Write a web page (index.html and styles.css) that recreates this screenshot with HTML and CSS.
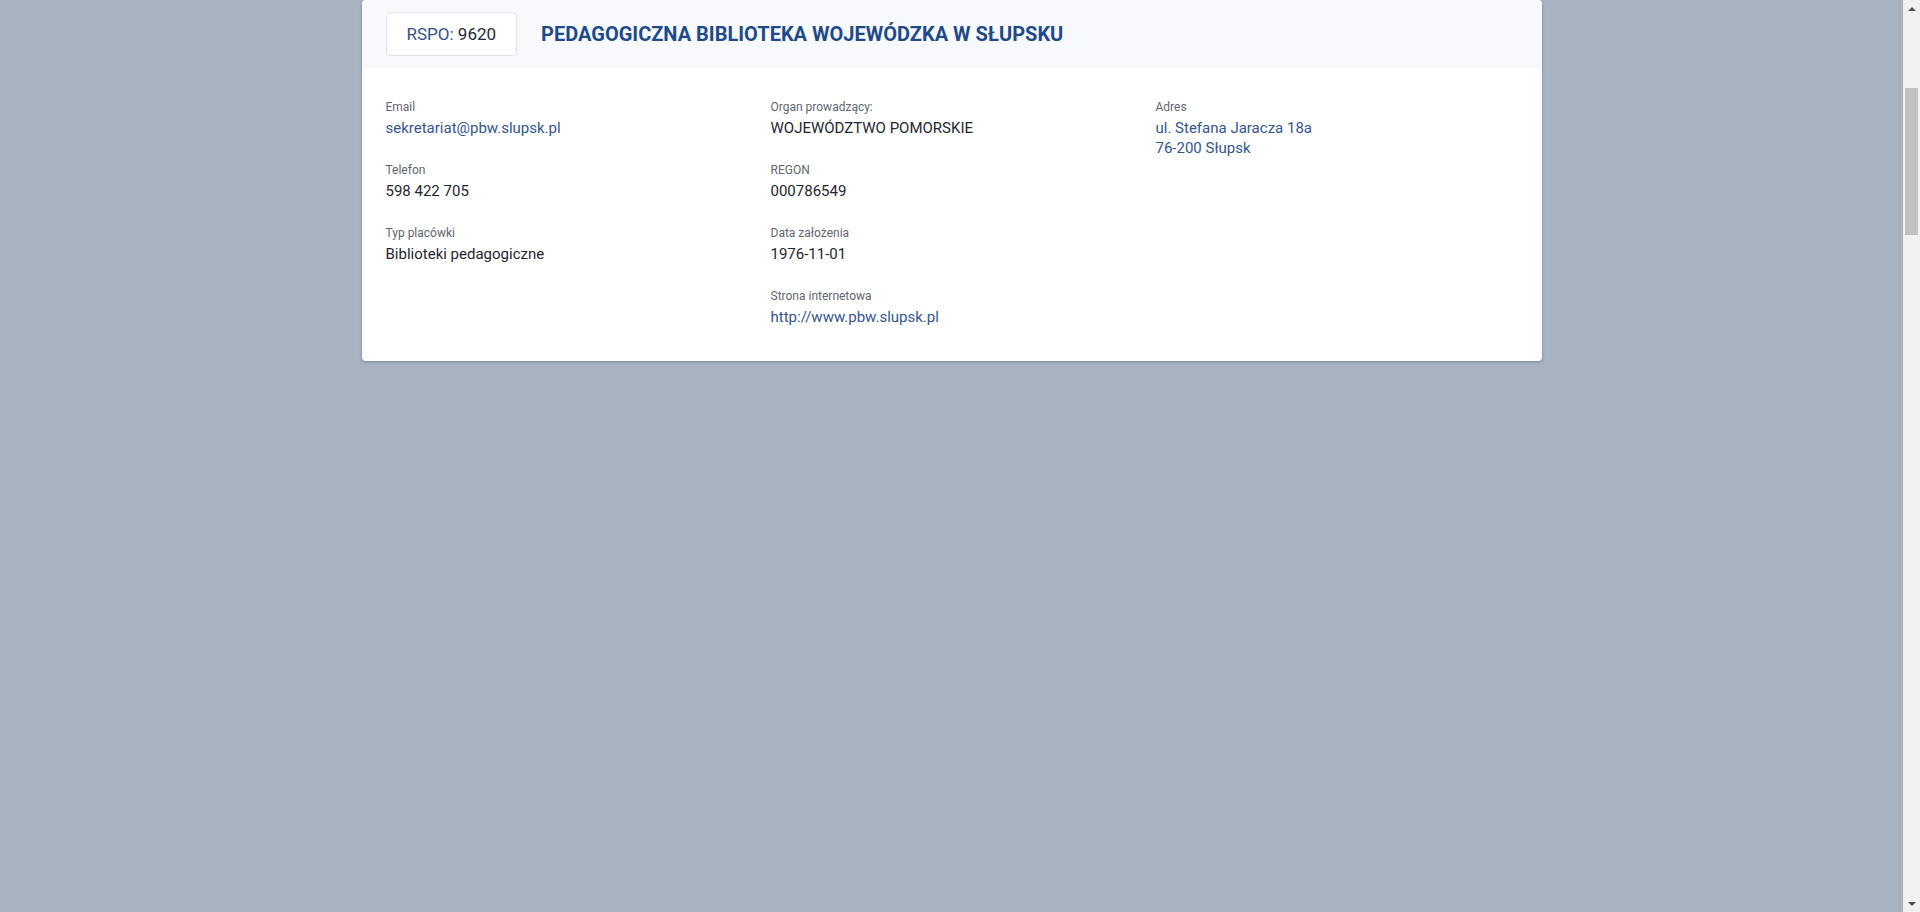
FILE: index.html
```html
<!DOCTYPE html>
<html lang="pl">
<head>
<meta charset="utf-8">
<title>Pedagogiczna Biblioteka Wojewódzka w Słupsku</title>
<link rel="stylesheet" href="styles.css">
</head>
<body>
<main class="page">
  <section class="card">
    <header class="card-header">
      <div class="rspo"><span class="rspo-label">RSPO:</span> 9620</div>
      <h1 class="title">PEDAGOGICZNA BIBLIOTEKA WOJEWÓDZKA W SŁUPSKU</h1>
    </header>
    <div class="card-body">
      <div class="col">
        <div class="field">
          <div class="label">Email</div>
          <a class="value link" href="#">sekretariat@pbw.slupsk.pl</a>
        </div>
        <div class="field">
          <div class="label">Telefon</div>
          <div class="value">598 422 705</div>
        </div>
        <div class="field">
          <div class="label">Typ placówki</div>
          <div class="value">Biblioteki pedagogiczne</div>
        </div>
      </div>
      <div class="col">
        <div class="field">
          <div class="label">Organ prowadzący:</div>
          <div class="value">WOJEWÓDZTWO POMORSKIE</div>
        </div>
        <div class="field">
          <div class="label">REGON</div>
          <div class="value">000786549</div>
        </div>
        <div class="field">
          <div class="label">Data założenia</div>
          <div class="value">1976-11-01</div>
        </div>
        <div class="field">
          <div class="label">Strona internetowa</div>
          <a class="value link" href="#">http://www.pbw.slupsk.pl</a>
        </div>
      </div>
      <div class="col">
        <div class="field">
          <div class="label">Adres</div>
          <a class="value link" href="#">ul. Stefana Jaracza 18a<br>76-200 Słupsk</a>
        </div>
      </div>
    </div>
  </section>
</main>
<aside class="scrollbar">
  <div class="arrow arrow-up"></div>
  <div class="track"><div class="thumb"></div></div>
  <div class="arrow arrow-down"></div>
</aside>
</body>
</html>
```
FILE: styles.css
```css
html, body {
  margin: 0;
  padding: 0;
  height: 100%;
}
body {
  display: flex;
  background: #a8b3c1;
  font-family: Roboto, "Liberation Sans", Arial, sans-serif;
  overflow: hidden;
}
.page {
  flex: 1;
  display: flex;
  justify-content: center;
  align-items: flex-start;
}
.card {
  width: 1180px;
  background: #ffffff;
  border-radius: 4px;
  box-shadow: 0 1px 3px rgba(40, 50, 70, 0.35);
}
.card-header {
  display: flex;
  align-items: center;
  gap: 24px;
  padding: 12px 24px;
  background: #f7f9fc;
  border-radius: 4px 4px 0 0;
}
.rspo {
  height: 42px;
  line-height: 42px;
  padding: 0 20px;
  border: 1px solid #dfe3ea;
  border-radius: 4px;
  background: #ffffff;
  font-size: 17px;
  color: #222a35;
}
.rspo-label {
  color: #34508a;
}
.title {
  margin: 0;
  font-size: 20px;
  font-weight: 700;
  color: #1f4a8a;
  letter-spacing: 0;
}
.card-body {
  display: grid;
  grid-template-columns: repeat(3, 385px);
  padding: 31px 24px 34px;
}
.col {
  display: flex;
  flex-direction: column;
  gap: 24px;
}
.field {
  display: flex;
  flex-direction: column;
  gap: 3px;
}
.label {
  font-size: 12px;
  line-height: 16px;
  color: #5f6670;
}
.value {
  font-size: 15px;
  line-height: 20px;
  color: #1f2630;
}
.link {
  color: #34568f;
  text-decoration: none;
}
.scrollbar {
  width: 17px;
  flex: none;
  display: flex;
  flex-direction: column;
  background: #f1f1f1;
}
.arrow {
  height: 17px;
  flex: none;
  display: flex;
  align-items: center;
  justify-content: center;
}
.arrow-up::before {
  content: "";
  border-left: 4px solid transparent;
  border-right: 4px solid transparent;
  border-bottom: 4px solid #505050;
}
.arrow-down::before {
  content: "";
  border-left: 4px solid transparent;
  border-right: 4px solid transparent;
  border-top: 4px solid #505050;
}
.track {
  flex: 1;
  padding-top: 71px;
}
.thumb {
  margin: 0 2px;
  height: 147px;
  background: #c1c1c1;
}
```
